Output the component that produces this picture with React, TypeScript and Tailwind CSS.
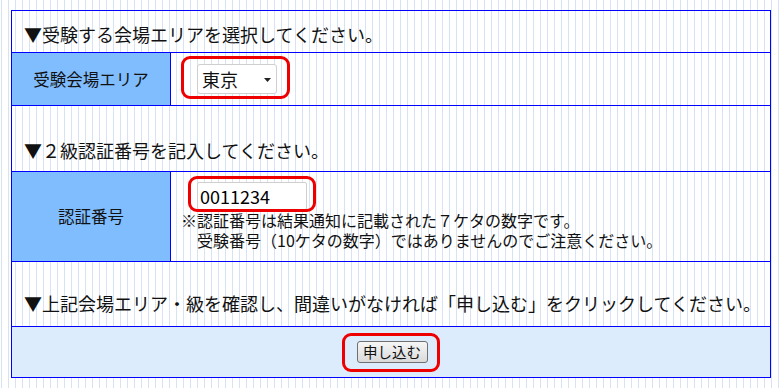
import React from "react";

function RedMark({ className }: { className: string }) {
  return (
    <div
      className={
        "pointer-events-none absolute border-[3px] border-[#ee0000] rounded-[9px] " +
        className
      }
    />
  );
}

export default function App() {
  return (
    <div className="w-[782px] h-[388px] bg-white bg-[image:repeating-linear-gradient(90deg,transparent_0px,transparent_1px,#d7e3f4_1px,#d7e3f4_2px,transparent_2px,transparent_7px)] pt-[10px] pl-[11px] font-['Noto_Sans_CJK_JP','Noto_Sans',sans-serif] text-[#111]">
      <div className="w-[760px] border border-[#0000ff]">
        {/* Row 1 */}
        <div className="h-[42px] border-b border-[#0000ff] flex items-center pt-[4px] pl-[12px] text-[18px] leading-[24px] whitespace-nowrap">
          ▼受験する会場エリアを選択してください。
        </div>
        {/* Row 2 */}
        <div className="h-[53px] border-b border-[#0000ff] flex">
          <div className="w-[159px] border-r border-[#0000ff] bg-[#80bdff] flex items-center justify-center text-[16.5px]">
            受験会場エリア
          </div>
          <div className="flex-1 flex items-center pl-[26px]">
            <div className="relative w-[80px] h-[30px] border border-[#cfcfcf] rounded-[3px] bg-white flex items-center pl-[4px] text-[18px] leading-[24px] text-[#111]">
              東京
              <svg
                className="absolute right-[5px] top-[13px]"
                width="7"
                height="4"
                viewBox="0 0 7 4"
              >
                <path d="M0 0H7L3.5 4Z" fill="#222" />
              </svg>
              <RedMark className="-left-[17px] -top-[9px] -right-[14px] -bottom-[6px]" />
            </div>
          </div>
        </div>
        {/* Row 3 */}
        <div className="h-[66px] border-b border-[#0000ff] flex items-end pb-[9px] pl-[12px] text-[18px] leading-[24px] whitespace-nowrap">
          ▼２級認証番号を記入してください。
        </div>
        {/* Row 4 */}
        <div className="h-[90px] border-b border-[#0000ff] flex">
          <div className="w-[159px] border-r border-[#0000ff] bg-[#80bdff] flex items-center justify-center text-[16.5px]">
            認証番号
          </div>
          <div className="flex-1 pl-[10px] pt-[10px]">
            <div className="relative ml-[16px] w-[110px] h-[28px] border border-[#cfcfcf] rounded-[2px] bg-white flex items-center pl-[2px] text-[18px] leading-[24px] text-[#000]">
              0011234
              <RedMark className="-left-[10px] -top-[7px] -right-[10px] -bottom-[3px]" />
            </div>
            <div className="text-[16px] leading-[20px] whitespace-pre">
              {"※認証番号は結果通知に記載された７ケタの数字です。\n　受験番号（10ケタの数字）ではありませんのでご注意ください。"}
            </div>
          </div>
        </div>
        {/* Row 5 */}
        <div className="h-[65px] border-b border-[#0000ff] flex items-end pb-[11px] pl-[12px] text-[18px] leading-[24px] whitespace-nowrap">
          ▼上記会場エリア・級を確認し、間違いがなければ「申し込む」をクリックしてください。
        </div>
        {/* Row 6 */}
        <div className="h-[50px] bg-[#ddecfd] flex items-center justify-center">
          <div className="relative ml-[2px] w-[71px] h-[22px] border border-[#707070] rounded-[3px] bg-linear-to-b from-[#f6f6f6] to-[#dadada] flex items-center justify-center text-[14.5px] leading-[18px] text-[#111]">
            申し込む
            <RedMark className="-left-[16px] -top-[9px] -right-[13px] -bottom-[10px]" />
          </div>
        </div>
      </div>
    </div>
  );
}
